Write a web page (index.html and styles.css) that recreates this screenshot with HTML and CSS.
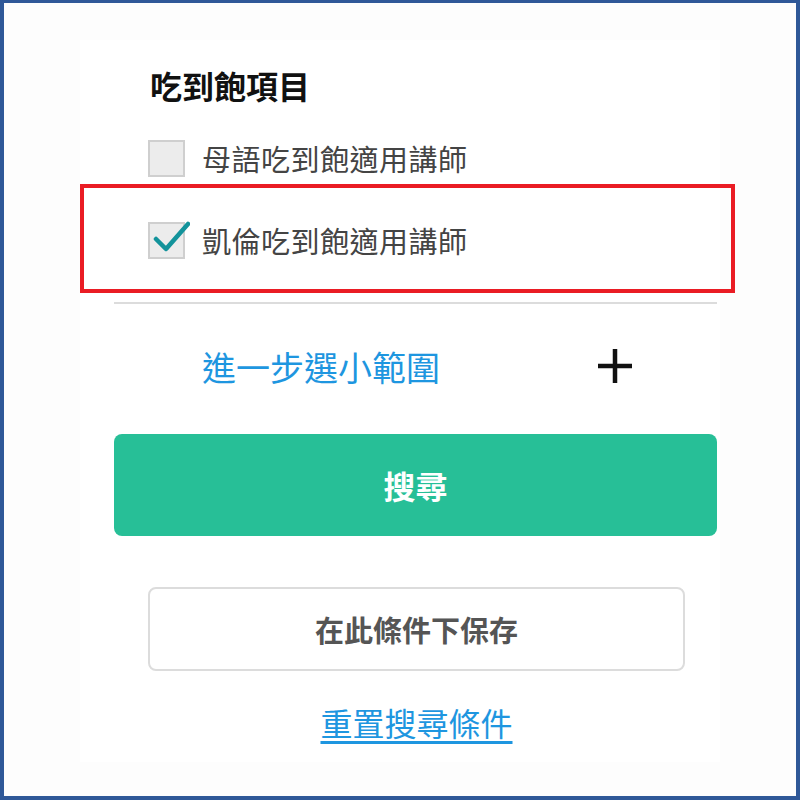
FILE: index.html
```html
<!DOCTYPE html>
<html lang="zh-Hant">
<head>
    <meta charset="UTF-8">
    <meta name="viewport" content="width=device-width, initial-scale=1.0">
    <title>吃到飽項目</title>
    <link rel="stylesheet" href="styles.css">
</head>
<body>
    <div class="frame">
        <div class="panel">
            <h2 class="section-title">吃到飽項目</h2>

            <label class="option">
                <span class="checkbox"></span>
                <span class="option-text">母語吃到飽適用講師</span>
            </label>

            <div class="highlight">
                <label class="option">
                    <span class="checkbox checked">
                        <svg class="check" viewBox="0 0 40 40" width="40" height="40">
                            <path d="M6 20 L16 30 L38 5" fill="none" stroke="#13939b" stroke-width="4.5" stroke-linecap="round" stroke-linejoin="round"/>
                        </svg>
                    </span>
                    <span class="option-text">凱倫吃到飽適用講師</span>
                </label>
            </div>

            <div class="divider"></div>

            <div class="more-row">
                <span class="more-link">進一步選小範圍</span>
                <svg class="plus" viewBox="0 0 34 34" width="34" height="34">
                    <path d="M17 0 V34 M0 17 H34" stroke="#111" stroke-width="4.5"/>
                </svg>
            </div>

            <button class="search-btn">搜尋</button>

            <button class="save-btn">在此條件下保存</button>

            <div class="reset-wrap">
                <a class="reset-link" href="#">重置搜尋條件</a>
            </div>
        </div>
    </div>
</body>
</html>
```

FILE: styles.css
```css
* {
    box-sizing: border-box;
}
body {
    margin: 0;
    font-family: "Noto Sans CJK TC", "Noto Sans", sans-serif;
}
.frame {
    width: 800px;
    height: 800px;
    border: 3px solid #2f5898;
    border-width: 3px 4px 4px 4px;
    background-color: #fdfdfd;
    padding: 37px 0 0 76px;
    overflow: hidden;
}
.panel {
    width: 640px;
    height: 722px;
    background-color: #fff;
    padding-top: 25px;
}
.section-title {
    margin: 0 0 0 70px;
    font-size: 32px;
    line-height: 40px;
    font-weight: bold;
    color: #111;
}
.option {
    display: flex;
    align-items: center;
    height: 40px;
    margin-left: 68px;
}
.panel > .option {
    margin-top: 33px;
}
.checkbox {
    position: relative;
    width: 37px;
    height: 37px;
    border: 2px solid #cfcfcf;
    background-color: #ececec;
    flex-shrink: 0;
}
.check {
    position: absolute;
    left: 0;
    top: -5px;
}
.option-text {
    margin-left: 17px;
    font-size: 29px;
    color: #444;
    letter-spacing: 0.5px;
}
.highlight {
    width: 655px;
    height: 109px;
    margin-top: 6px;
    border: 4px solid #ea1c24;
    padding-top: 32px;
}
.highlight .option {
    margin-left: 64px;
}
.divider {
    height: 2px;
    width: 603px;
    margin: 9px 0 0 34px;
    background-color: #dcdcdc;
}
.more-row {
    display: flex;
    align-items: center;
    justify-content: space-between;
    height: 44px;
    margin: 40px 0 0 122px;
    width: 430px;
}
.more-link {
    font-size: 34px;
    color: #1e96e0;
    cursor: pointer;
}
.search-btn {
    display: block;
    width: 603px;
    height: 102px;
    margin: 46px 0 0 34px;
    border: none;
    border-radius: 8px;
    background-color: #27bf97;
    color: #fff;
    font-family: inherit;
    font-size: 32px;
    font-weight: bold;
    cursor: pointer;
}
.save-btn {
    display: block;
    width: 537px;
    height: 84px;
    margin: 51px 0 0 68px;
    border: 2px solid #dcdcdc;
    border-radius: 8px;
    background-color: #fff;
    color: #555;
    font-family: inherit;
    font-size: 29px;
    font-weight: bold;
    cursor: pointer;
}
.reset-wrap {
    width: 537px;
    margin: 28px 0 0 68px;
    text-align: center;
}
.reset-link {
    font-size: 32px;
    color: #1e96e0;
    text-decoration: underline;
    text-underline-offset: 5px;
}
```
